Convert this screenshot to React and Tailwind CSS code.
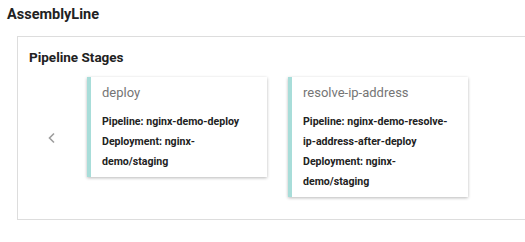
export default function App() {
  const cards = [
    {
      title: "deploy",
      pipeline: "nginx-demo-deploy",
      deployment: "nginx-demo/staging",
    },
    {
      title: "resolve-ip-address",
      pipeline: "nginx-demo-resolve-ip-address-after-deploy",
      deployment: "nginx-demo/staging",
    },
  ];
  return (
    <div
      className="w-[525px] h-[242px] overflow-hidden bg-white text-[#212121]"
      style={{ fontFamily: "Roboto, 'Liberation Sans', sans-serif" }}
    >
      <div className="pl-[7px] pt-[5px] text-[14.5px] leading-[20px] font-bold text-[#222]">
        AssemblyLine
      </div>
      <div className="ml-[17px] mt-[11px] w-[540px] h-[184px] border border-[#dddddd] pl-[11px] pt-[10px]">
        <div className="text-[13.5px] leading-[20px] font-bold text-[#222]">
          Pipeline Stages
        </div>
        <div className="mt-[10px] flex items-start">
          <div className="w-[46px] self-stretch flex items-center justify-center">
            <svg width="10" height="12" viewBox="0 0 10 12" className="mt-[1px]">
              <path d="M7 1.5 L2.5 6 L7 10.5" fill="none" stroke="#9e9e9e" strokeWidth="1.6" />
            </svg>
          </div>
          <div className="flex items-start gap-[21px] ml-[12px]">
            {cards.map((c) => (
              <div
                key={c.title}
                className="w-[180px] bg-white border-l-[4px] border-[#a8ddd9] pl-[11px] pr-[12px] pt-[6px] pb-[5px] shadow-[0_1px_3px_rgba(0,0,0,0.28)]"
              >
                <div className="text-[13px] leading-[20px] text-[#757575]">
                  {c.title}
                </div>
                <div className="mt-[9px] text-[10.6px] leading-[20px] font-bold text-[#222] break-words">
                  <div>Pipeline: {c.pipeline}</div>
                  <div>Deployment: {c.deployment}</div>
                </div>
              </div>
            ))}
          </div>
        </div>
      </div>
    </div>
  );
}
